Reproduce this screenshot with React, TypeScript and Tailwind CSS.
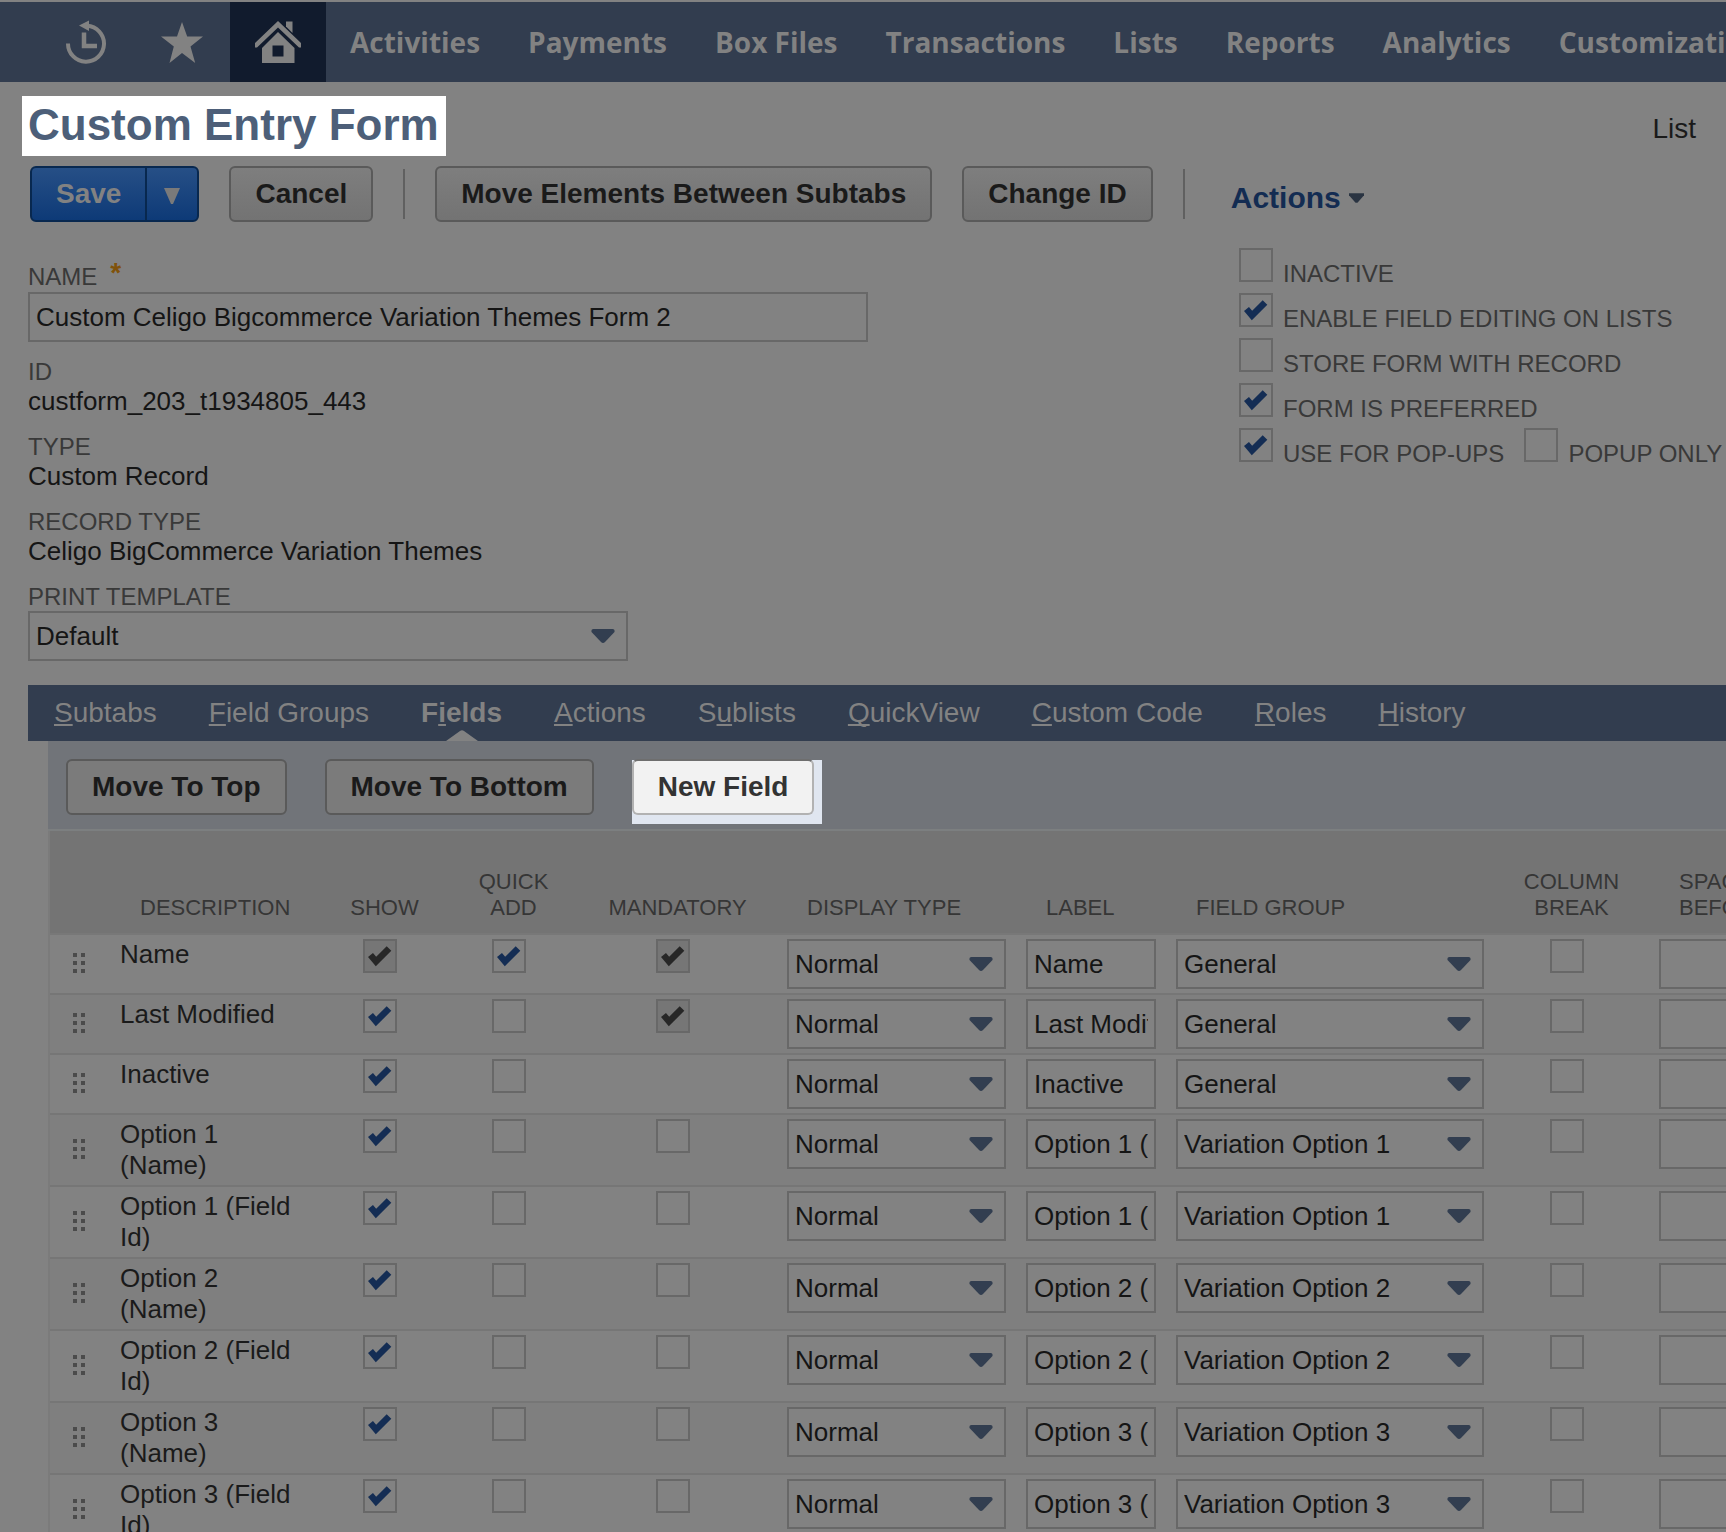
import React from "react";

const navItems = [
  "Activities",
  "Payments",
  "Box Files",
  "Transactions",
  "Lists",
  "Reports",
  "Analytics",
  "Customization",
];

// [before, access key, after]
const tabs = [
  ["", "S", "ubtabs"],
  ["", "F", "ield Groups"],
  ["F", "i", "elds"],
  ["", "A", "ctions"],
  ["S", "u", "blists"],
  ["", "Q", "uickView"],
  ["", "C", "ustom Code"],
  ["", "R", "oles"],
  ["", "H", "istory"],
];
const activeTab = 2;

type Check = "on" | "off" | "locked" | "none";

type Row = {
  name: string;
  show: Check;
  quickAdd: Check;
  mandatory: Check;
  group: string;
};

const option = (name: string, group: string): Row => ({
  name,
  show: "on",
  quickAdd: "off",
  mandatory: "off",
  group,
});

const rows: Row[] = [
  { name: "Name", show: "locked", quickAdd: "on", mandatory: "locked", group: "General" },
  { name: "Last Modified", show: "on", quickAdd: "off", mandatory: "locked", group: "General" },
  { name: "Inactive", show: "on", quickAdd: "off", mandatory: "none", group: "General" },
  option("Option 1 (Name)", "Variation Option 1"),
  option("Option 1 (Field Id)", "Variation Option 1"),
  option("Option 2 (Name)", "Variation Option 2"),
  option("Option 2 (Field Id)", "Variation Option 2"),
  option("Option 3 (Name)", "Variation Option 3"),
  option("Option 3 (Field Id)", "Variation Option 3"),
];

const HistoryIcon = () => (
  <svg className="h-11 w-10" viewBox="0 0 40 44" fill="none" aria-hidden="true">
    <path d="M2 23.500A18 18 0 1 0 21 5.700" stroke="#828282" strokeWidth="4" />
    <path d="M13 5.500L23 0.500V11Z" fill="#828282" />
    <path d="M18 12.500V26H31" stroke="#828282" strokeWidth="4.500" />
  </svg>
);

const StarIcon = () => (
  <svg className="h-[42px] w-[42px]" viewBox="0 0 42 42" aria-hidden="true">
    <path
      d="M21 1L26.200 15.500H42L29.500 25.500L34.200 42L21 32L8.500 42L12.800 25.500L0 15.500H16Z"
      fill="#828282"
    />
  </svg>
);

const HomeIcon = () => (
  <svg className="h-[42px] w-[46px]" viewBox="0 0 46 42" aria-hidden="true">
    <path d="M23 0L46 22V26.500H44L23 6.500L2 26.500H0V22Z" fill="#828282" />
    <path d="M31 0.500H37.500V12L31 5.500Z" fill="#828282" />
    <path
      d="M23 11L39.500 27V42H7V27ZM17.500 24.500V35.500H28.500V24.500Z"
      fill="#828282"
      fillRule="evenodd"
    />
  </svg>
);

const Arrow = () => (
  <svg
    className="pointer-events-none absolute top-[18px] right-[13px] h-4 w-6"
    viewBox="0 0 24 16"
    aria-hidden="true"
  >
    <path
      d="M2.500 0H21.500Q24 0 23.500 3L14 13Q12 15 10 13L0.500 3Q0 0 2.500 0Z"
      fill="#323e50"
    />
  </svg>
);

const DragHandle = () => (
  <svg className="block h-5 w-3" viewBox="0 0 12 20" fill="#4b4b4b" aria-hidden="true">
    {[0, 8, 16].map((y) => (
      <React.Fragment key={y}>
        <rect x="0" y={y} width="4" height="4" />
        <rect x="8" y={y} width="4" height="4" />
      </React.Fragment>
    ))}
  </svg>
);

const CheckBox = ({ id, label, state }: { id?: string; label?: string; state: Check }) => {
  if (state === "none") return null;
  return (
    <span className="relative block size-[34px] shrink-0">
      <input
        id={id}
        type="checkbox"
        aria-label={label}
        defaultChecked={state !== "off"}
        disabled={state === "locked"}
        className="peer block size-full appearance-none border-2 border-[#686868] bg-[#828282] disabled:bg-[#767676]"
      />
      <svg
        className="pointer-events-none absolute inset-0 hidden size-full text-[#142d54] peer-checked:block peer-disabled:text-[#272727]"
        viewBox="0 0 34 34"
        fill="none"
        aria-hidden="true"
      >
        <path d="M7.500 16L13 22.500L26 9.500" stroke="currentColor" strokeWidth="6.500" />
      </svg>
    </span>
  );
};

const SelectBox = ({ id, label, value }: { id?: string; label?: string; value: string }) => (
  <div className="relative">
    <select
      id={id}
      aria-label={label}
      defaultValue={value}
      className="block h-[50px] w-full appearance-none border-2 border-[#686868] bg-[#828282] px-1.5 text-[26px] text-[#151515]"
    >
      <option>{value}</option>
    </select>
    <Arrow />
  </div>
);

const textBox =
  "block h-[50px] w-full border-2 border-[#686868] bg-[#828282] px-1.5 text-[26px] text-[#151515]";
const button = "h-14 rounded-md border-2 px-6 text-[28px] font-bold whitespace-nowrap";
const formButton = "border-[#5a5a5a] bg-linear-to-b from-[#7e7e7e] to-[#737373] text-[#1a1a1a]";
const listButton = "border-[#5a5a5a] bg-[#7b7b7b] text-[#1a1a1a]";

const ReadOnlyField = ({ label, value }: { label: string; value: string }) => (
  <div className="mb-4">
    <dt className="text-2xl leading-[29px] text-[#393939]">{label}</dt>
    <dd className="text-[26px] leading-[30px] text-[#151515]">{value}</dd>
  </div>
);

const Option = ({ id, label, on }: { id: string; label: string; on?: boolean }) => (
  <div className="flex h-[45px] items-start gap-2.5">
    <CheckBox id={id} state={on ? "on" : "off"} />
    <label htmlFor={id} className="pt-3 text-2xl leading-7 whitespace-nowrap text-[#393939]">
      {label}
    </label>
  </div>
);

const NavBar = () => (
  <nav className="flex h-[82px] items-stretch overflow-hidden border-t-2 border-[#828282] bg-[#323d4f] pl-[38px]">
    <a
      href="#recent"
      aria-label="Recent records"
      className="flex w-24 shrink-0 items-center justify-center"
    >
      <HistoryIcon />
    </a>
    <a
      href="#shortcuts"
      aria-label="Shortcuts"
      className="flex w-24 shrink-0 items-center justify-center"
    >
      <StarIcon />
    </a>
    <a
      href="#home"
      aria-label="Home"
      className="flex w-24 shrink-0 items-center justify-center bg-[#111b2d]"
    >
      <HomeIcon />
    </a>
    <ul className="flex items-center">
      {navItems.map((item) => (
        <li key={item}>
          <a
            href="#menu"
            className="px-6 font-['Open_Sans',sans-serif] text-[28px] font-bold whitespace-nowrap text-[#828282]"
          >
            {item}
          </a>
        </li>
      ))}
    </ul>
  </nav>
);

const Toolbar = () => (
  <div className="flex items-center pl-[30px]">
    <div className="flex h-14 rounded-md border-2 border-[#08284f] bg-linear-to-b from-[#264f86] to-[#0d3a77] font-bold text-[#828282]">
      <button type="button" className="px-6 text-[28px]">
        Save
      </button>
      <button
        type="button"
        aria-label="More save options"
        className="flex w-[52px] items-center justify-center border-l-2 border-[#08284f] pt-1"
      >
        <svg className="h-4 w-4" viewBox="0 0 16 16" fill="#7a7a7a" aria-hidden="true">
          <path d="M0 0H16L9 16H7Z" />
        </svg>
      </button>
    </div>
    <button type="button" className={`${button} ${formButton} ml-[30px]`}>
      Cancel
    </button>
    <span className="mx-[30px] h-[50px] w-0.5 bg-[#606060]" />
    <button type="button" className={`${button} ${formButton}`}>
      Move Elements Between Subtabs
    </button>
    <button type="button" className={`${button} ${formButton} ml-[30px]`}>
      Change ID
    </button>
    <span className="ml-[30px] h-[50px] w-0.5 bg-[#606060]" />
    <button
      type="button"
      className="ml-[46px] flex items-center gap-2 pt-2 text-[30px] leading-9 font-bold text-[#132c52]"
    >
      Actions
      <svg className="h-2.5 w-[15px]" viewBox="0 0 16 10" fill="#2a3442" aria-hidden="true">
        <path d="M0 0H16V2L9 10H7L0 2Z" />
      </svg>
    </button>
  </div>
);

const FieldsTable = () => (
  <table className="w-full min-w-[1850px] table-fixed border-separate border-spacing-0">
    <colgroup>
      <col className="w-[60px]" />
      <col className="w-[210px]" />
      <col className="w-[129px]" />
      <col className="w-[129px]" />
      <col className="w-[199px]" />
      <col className="w-[239px]" />
      <col className="w-[150px]" />
      <col className="w-[328px]" />
      <col className="w-[155px]" />
      <col />
    </colgroup>
    <thead>
      <tr className="h-[104px] bg-[#747474] text-[22px] leading-[26px] text-[#363636] [&>th]:border-b-2 [&>th]:border-[#787878] [&>th]:pb-3 [&>th]:align-bottom [&>th]:font-normal">
        <th />
        <th className="pl-[30px] text-left">DESCRIPTION</th>
        <th>SHOW</th>
        <th>
          QUICK
          <br />
          ADD
        </th>
        <th>MANDATORY</th>
        <th className="pl-[30px] text-left">DISPLAY TYPE</th>
        <th className="pl-[30px] text-left">LABEL</th>
        <th className="pl-[30px] text-left">FIELD GROUP</th>
        <th>
          COLUMN
          <br />
          BREAK
        </th>
        <th className="pl-[30px] text-left">
          SPACE
          <br />
          BEFORE
        </th>
      </tr>
    </thead>
    <tbody>
      {rows.map((row) => (
        <tr
          key={row.name}
          className="align-top odd:bg-[#828282] even:bg-[#7f7f7f] [&>td]:border-b-2 [&>td]:border-[#767676] [&>td]:py-1"
        >
          <td className="pl-[23px] align-middle">
            <div className="pb-0.5">
              <DragHandle />
            </div>
          </td>
          <td className="pr-5 pl-[10px] text-[26px] leading-[31px] text-[#1a1a1a]">{row.name}</td>
          {[row.show, row.quickAdd, row.mandatory].map((state, i) => (
            <td key={i}>
              <div className="flex justify-center pr-[10px]">
                <CheckBox state={state} label={`${["Show", "Quick add", "Mandatory"][i]} ${row.name}`} />
              </div>
            </td>
          ))}
          <td className="px-[10px]">
            <SelectBox label={`Display type of ${row.name}`} value="Normal" />
          </td>
          <td className="px-[10px]">
            <input
              aria-label={`Label of ${row.name}`}
              defaultValue={row.name}
              className={textBox}
            />
          </td>
          <td className="px-[10px]">
            <SelectBox label={`Field group of ${row.name}`} value={row.group} />
          </td>
          <td>
            <div className="flex justify-center pr-[10px]">
              <CheckBox state="off" label={`Column break after ${row.name}`} />
            </div>
          </td>
          <td className="px-[10px]">
            <input aria-label={`Space before ${row.name}`} className={textBox} />
          </td>
        </tr>
      ))}
    </tbody>
  </table>
);

export default function App() {
  return (
    <div className="h-screen overflow-hidden bg-[#828282] font-['Liberation_Sans',Arial,sans-serif]">
      <NavBar />

      <header className="flex items-start justify-between pt-[14px] pr-[30px] pl-[22px]">
        <h1 className="h-[60px] bg-white pr-[7px] pl-1.5 text-[44px] leading-[58px] font-bold text-[#4d5f79]">
          Custom Entry Form
        </h1>
        <a href="#list" className="pt-4 text-[28px] leading-[34px] text-[#1a1a1a]">
          List
        </a>
      </header>

      <div className="pt-[10px]">
        <Toolbar />
      </div>

      <div className="flex pl-7">
        <div className="w-[1211px] pt-10">
          <label htmlFor="name" className="flex gap-[13px] text-2xl leading-[30px] text-[#393939]">
            NAME <span className="text-[28px] leading-[22px] font-bold text-[#80520a]">*</span>
          </label>
          <div className="w-[840px]">
            <input
              id="name"
              defaultValue="Custom Celigo Bigcommerce Variation Themes Form 2"
              className={textBox}
            />
          </div>
          <dl className="pt-[15px]">
            <ReadOnlyField label="ID" value="custform_203_t1934805_443" />
            <ReadOnlyField label="TYPE" value="Custom Record" />
            <ReadOnlyField label="RECORD TYPE" value="Celigo BigCommerce Variation Themes" />
          </dl>
          <label htmlFor="template" className="block text-2xl leading-[29px] text-[#393939]">
            PRINT TEMPLATE
          </label>
          <div className="w-[600px]">
            <SelectBox id="template" value="Default" />
          </div>
        </div>

        <div className="pt-[26px]">
          <Option id="inactive" label="INACTIVE" />
          <Option id="editing" label="ENABLE FIELD EDITING ON LISTS" on />
          <Option id="store" label="STORE FORM WITH RECORD" />
          <Option id="preferred" label="FORM IS PREFERRED" on />
          <div className="flex gap-5">
            <Option id="popups" label="USE FOR POP-UPS" on />
            <Option id="popuponly" label="POPUP ONLY" />
          </div>
        </div>
      </div>

      <nav className="mt-6 ml-7 flex h-14 gap-[52px] bg-[#323d4f] pl-[26px]">
        {tabs.map(([before, key, after], i) => (
          <a
            key={after}
            href="#tab"
            className={`relative text-[28px] leading-[56px] whitespace-nowrap text-[#828282] ${
              i === activeTab ? "font-bold" : ""
            }`}
          >
            {before}
            <span className="underline decoration-2 underline-offset-2 [text-decoration-skip-ink:none]">
              {key}
            </span>
            {after}
            {i === activeTab && (
              <svg
                className="absolute bottom-0 left-1/2 h-[11px] w-8 -translate-x-1/2"
                viewBox="0 0 32 11"
                fill="#828282"
                aria-hidden="true"
              >
                <path d="M0 11L14 1Q16 -0.500 18 1L32 11Z" />
              </svg>
            )}
          </a>
        ))}
      </nav>

      <section className="ml-12">
        <div className="flex h-[90px] items-start border-b-2 border-[#7c7f80] bg-[#717479] pt-[18px] pl-[18px]">
          <button type="button" className={`${button} ${listButton}`}>
            Move To Top
          </button>
          <button type="button" className={`${button} ${listButton} ml-[38px]`}>
            Move To Bottom
          </button>
          <div className="mt-px ml-[38px] h-16 bg-[#e0e6f0] pr-2">
            <button
              type="button"
              className={`${button} -mt-px border-[#b2b2b2] border-t-[#6e6e6e] bg-[#f2f2f2] text-[#333333]`}
            >
              New Field
            </button>
          </div>
        </div>
        <div className="overflow-hidden border-l-2 border-[#7b7b7b]">
          <FieldsTable />
        </div>
      </section>
    </div>
  );
}
